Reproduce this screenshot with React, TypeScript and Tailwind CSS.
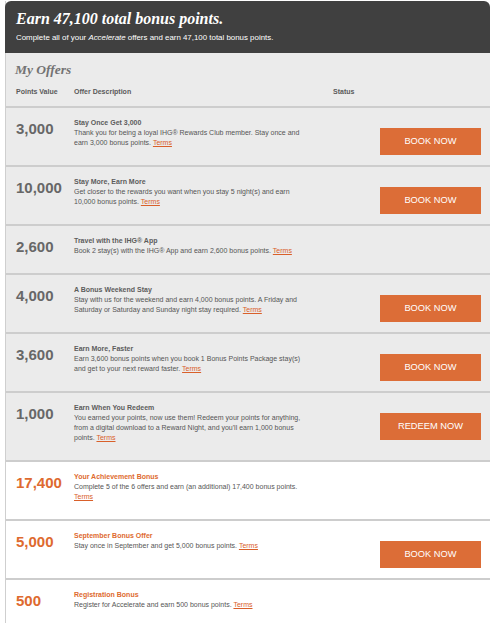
import { Fragment } from 'react'

type Offer = {
  points: string
  title: string
  lines: string[]
  termsOwnLine?: boolean
  action?: string
  bonus?: boolean
}

const OFFERS: Offer[] = [
  {
    points: '3,000',
    title: 'Stay Once Get 3,000',
    lines: ['Thank you for being a loyal IHG® Rewards Club member. Stay once and', 'earn 3,000 bonus points.'],
    action: 'BOOK NOW',
  },
  {
    points: '10,000',
    title: 'Stay More, Earn More',
    lines: ['Get closer to the rewards you want when you stay 5 night(s) and earn', '10,000 bonus points.'],
    action: 'BOOK NOW',
  },
  {
    points: '2,600',
    title: 'Travel with the IHG® App',
    lines: ['Book 2 stay(s) with the IHG® App and earn 2,600 bonus points.'],
  },
  {
    points: '4,000',
    title: 'A Bonus Weekend Stay',
    lines: ['Stay with us for the weekend and earn 4,000 bonus points. A Friday and', 'Saturday or Saturday and Sunday night stay required.'],
    action: 'BOOK NOW',
  },
  {
    points: '3,600',
    title: 'Earn More, Faster',
    lines: ['Earn 3,600 bonus points when you book 1 Bonus Points Package stay(s)', 'and get to your next reward faster.'],
    action: 'BOOK NOW',
  },
  {
    points: '1,000',
    title: 'Earn When You Redeem',
    lines: [
      'You earned your points, now use them! Redeem your points for anything,',
      "from a digital download to a Reward Night, and you'll earn 1,000 bonus",
      'points.',
    ],
    action: 'REDEEM NOW',
  },
  {
    points: '17,400',
    title: 'Your Achievement Bonus',
    lines: ['Complete 5 of the 6 offers and earn (an additional) 17,400 bonus points.'],
    termsOwnLine: true,
    bonus: true,
  },
  {
    points: '5,000',
    title: 'September Bonus Offer',
    lines: ['Stay once in September and get 5,000 bonus points.'],
    action: 'BOOK NOW',
    bonus: true,
  },
  {
    points: '500',
    title: 'Registration Bonus',
    lines: ['Register for Accelerate and earn 500 bonus points.'],
    bonus: true,
  },
]

const SERIF = "font-['Liberation_Serif',Georgia,serif]"
const SANS = "font-['Liberation_Sans',Arial,sans-serif]"

function Terms() {
  return <a className="text-[#d9602a] underline decoration-[#d9602a]">Terms</a>
}

function OfferRow({ offer }: { offer: Offer }) {
  const { points, title, lines, termsOwnLine, action, bonus } = offer
  return (
    <div
      className={`flex items-start border-t-2 border-[#cdcdcd] ${bonus ? 'bg-white' : 'bg-[#ebebeb]'}`}
    >
      <div
        className={`w-[68px] shrink-0 pl-[10px] pt-[12px] text-[15px] font-bold leading-[17px] ${
          bonus ? 'text-[#de6a2f]' : 'text-[#676767]'
        }`}
      >
        {points}
      </div>
      <div className="w-[282px] shrink-0 pb-[17px] pt-[10px] text-[7px] leading-[10px] text-[#555]">
        <p className={`font-bold ${bonus ? 'text-[#de6a2f]' : 'text-[#5c5c5c]'}`}>{title}</p>
        {lines.map((line, i) => (
          <Fragment key={i}>
            <span className="whitespace-nowrap">
              {line}
              {i === lines.length - 1 && !termsOwnLine && (
                <>
                  {' '}
                  <Terms />
                </>
              )}
            </span>
            <br />
          </Fragment>
        ))}
        {termsOwnLine && <Terms />}
      </div>
      {action && (
        <div className="ml-auto mr-[9px] mt-[20px] mb-[10px]">
          <button className="flex h-[27px] w-[101px] items-center justify-center bg-[#dc6d37] text-[9.3px] text-white">
            {action}
          </button>
        </div>
      )}
    </div>
  )
}

export default function App() {
  return (
    <div className={`h-[623px] w-[490px] overflow-hidden bg-white pl-[5px] pt-[1px] ${SANS}`}>
      <div className="border-l border-[#cfcfcf]">
        <header className="-ml-px rounded-t-[6px] bg-[#404040] pb-[10px] pl-[11px] pt-[7px] text-white">
          <h1 className={`${SERIF} text-[16px] font-bold italic leading-[22px]`}>
            Earn 47,100 total bonus points.
          </h1>
          <p className="mt-[3px] text-[7.9px] leading-[10px]">
            Complete all of your <i>Accelerate</i> offers and earn 47,100 total bonus points.
          </p>
        </header>
        <div className="bg-[#ebebeb]">
          <h2 className={`${SERIF} pl-[9px] pt-[9px] text-[13.5px] font-bold italic leading-[16px] text-[#737373]`}>
            My Offers
          </h2>
          <div className="flex pb-[10px] pt-[9px] text-[7px] font-bold leading-[9px] text-[#5a5a5a]">
            <span className="w-[68px] shrink-0 pl-[10px]">Points Value</span>
            <span className="w-[259px] shrink-0">Offer Description</span>
            <span>Status</span>
          </div>
        </div>
        {OFFERS.map(offer => (
          <OfferRow key={offer.title} offer={offer} />
        ))}
      </div>
    </div>
  )
}
